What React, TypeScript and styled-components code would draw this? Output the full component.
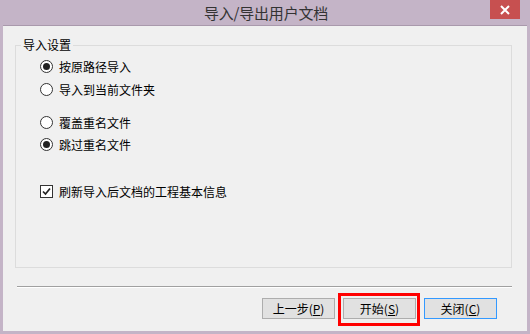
import styled, { createGlobalStyle } from "styled-components";

const GlobalStyle = createGlobalStyle`
  html, body {
    margin: 0;
    padding: 0;
    background: #c4b4c7;
  }
  body {
    font-family: "Noto Sans CJK SC", "Liberation Sans", sans-serif;
    font-size: 12px;
    color: #000;
  }
`;

const Window = styled.div`
  width: 530px;
  height: 334px;
  box-sizing: border-box;
  background: #c4b4c7;
  display: flex;
  flex-direction: column;
  padding: 0 3px 3px;
`;

const TitleBar = styled.div`
  height: 25px;
  display: flex;
  align-items: flex-start;
  position: relative;
`;

const Title = styled.div`
  flex: 1;
  text-align: center;
  font-size: 15px;
  line-height: 25px;
  color: #333;
  padding-left: 2px;
  letter-spacing: -0.2px;
`;

const CloseButton = styled.div`
  position: absolute;
  right: 7px;
  top: 0;
  width: 30px;
  height: 19px;
  background: #c75050;
  display: flex;
  align-items: center;
  justify-content: center;
`;

const Client = styled.div`
  flex: 1;
  background: #f0f0f0;
  border-top: 1px solid #a999ac;
  display: flex;
  flex-direction: column;
  padding: 19px 15px 0 12px;
`;

const GroupBox = styled.div`
  position: relative;
  box-sizing: border-box;
  height: 223px;
  border: 1px solid #dcdcdc;
  display: flex;
  flex-direction: column;
  padding: 10px 0 0 24px;
`;

const GroupLabel = styled.span`
  position: absolute;
  left: 5px;
  top: -10px;
  padding: 0 2px;
  background: #f0f0f0;
  line-height: 18px;
`;

const Option = styled.label<{ $space: number }>`
  display: flex;
  align-items: center;
  gap: 5px;
  height: 20px;
  margin-top: ${(p) => p.$space}px;
`;

const Radio = styled.span<{ $on?: boolean }>`
  width: 11px;
  height: 11px;
  border: 1px solid #333;
  border-radius: 50%;
  background: #fff;
  display: flex;
  align-items: center;
  justify-content: center;
  margin-right: 1px;
  &::after {
    content: "";
    width: 7px;
    height: 7px;
    border-radius: 50%;
    background: ${(p) => (p.$on ? "#222" : "transparent")};
  }
`;

const Check = styled.span`
  width: 11px;
  height: 11px;
  border: 1px solid #333;
  background: #fff;
  display: flex;
  align-items: center;
  justify-content: center;
  margin-right: 1px;
`;

const Separator = styled.div`
  margin: 18px 0 0 2px;
  height: 1px;
  background: #a0a0a0;
  border-bottom: 1px solid #fff;
`;

const ButtonRow = styled.div`
  display: flex;
  justify-content: flex-end;
  gap: 8px;
  margin-top: 10px;
  padding-right: 15px;
`;

const Button = styled.div<{ $focused?: boolean }>`
  position: relative;
  width: 73px;
  height: 21px;
  box-sizing: border-box;
  background: #e1e1e1;
  border: 1px solid ${(p) => (p.$focused ? "#3399ff" : "#adadad")};
  display: flex;
  align-items: center;
  justify-content: center;
  font-size: 12px;
  u {
    text-decoration: underline;
  }
`;

const Highlight = styled.div`
  position: absolute;
  left: -6px;
  right: -5px;
  top: -6px;
  bottom: -8px;
  border: 3px solid #ff0000;
`;

const options = [
  { text: "按原路径导入", on: true, space: 0 },
  { text: "导入到当前文件夹", on: false, space: 3 },
  { text: "覆盖重名文件", on: false, space: 13 },
  { text: "跳过重名文件", on: true, space: 2 },
];

export default function App() {
  return (
    <>
      <GlobalStyle />
      <Window>
        <TitleBar>
          <Title>导入/导出用户文档</Title>
          <CloseButton>
            <svg width="10" height="10" viewBox="0 0 10 10">
              <path d="M1 1 L9 9 M9 1 L1 9" stroke="#fff" strokeWidth="2" />
            </svg>
          </CloseButton>
        </TitleBar>
        <Client>
          <GroupBox>
            <GroupLabel>导入设置</GroupLabel>
            {options.map((o) => (
              <Option key={o.text} $space={o.space}>
                <Radio $on={o.on} />
                {o.text}
              </Option>
            ))}
            <Option $space={27}>
              <Check>
                <svg width="9" height="9" viewBox="0 0 9 9">
                  <path
                    d="M1 4.5 L3.5 7 L8 1.5"
                    stroke="#222"
                    strokeWidth="1.7"
                    fill="none"
                  />
                </svg>
              </Check>
              刷新导入后文档的工程基本信息
            </Option>
          </GroupBox>
          <Separator />
          <ButtonRow>
            <Button>
              上一步(<u>P</u>)
            </Button>
            <Button>
              开始(<u>S</u>)
              <Highlight />
            </Button>
            <Button $focused>
              关闭(<u>C</u>)
            </Button>
          </ButtonRow>
        </Client>
      </Window>
    </>
  );
}
